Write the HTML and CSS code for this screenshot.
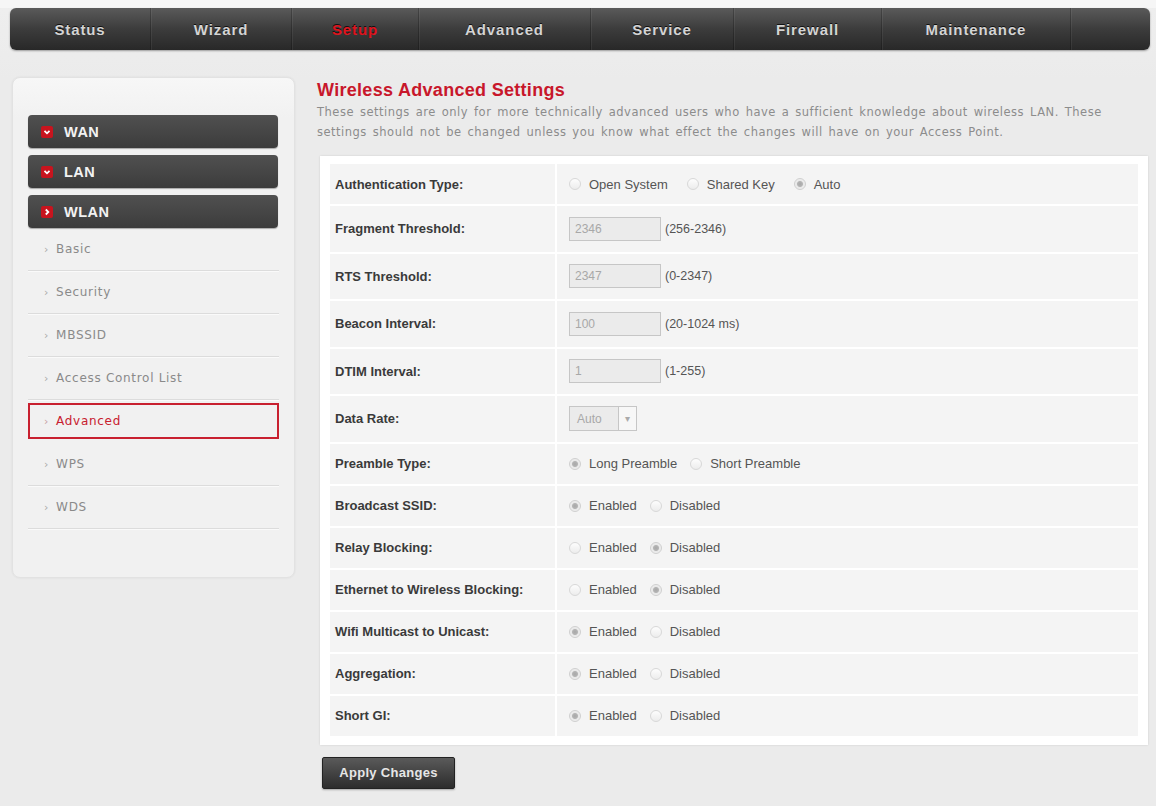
FILE: index.html
```html
<!DOCTYPE html>
<html>
<head>
<meta charset="utf-8">
<title>Wireless Advanced Settings</title>
<link rel="stylesheet" href="styles.css">
</head>
<body>

<div class="topnav">
  <a class="nav-item">Status</a>
  <a class="nav-item">Wizard</a>
  <a class="nav-item active">Setup</a>
  <a class="nav-item">Advanced</a>
  <a class="nav-item">Service</a>
  <a class="nav-item">Firewall</a>
  <a class="nav-item">Maintenance</a>
  <span class="nav-item nav-end"></span>
</div>

<div class="main">
  <div class="sidebar">
    <div class="menu-head">
      <span class="menu-icon"><svg width="12" height="12" viewBox="0 0 12 12"><path d="M3.5 4.8 L6 7.3 L8.5 4.8" fill="none" stroke="#fff" stroke-width="1.8"/></svg></span>WAN
    </div>
    <div class="menu-head">
      <span class="menu-icon"><svg width="12" height="12" viewBox="0 0 12 12"><path d="M3.5 4.8 L6 7.3 L8.5 4.8" fill="none" stroke="#fff" stroke-width="1.8"/></svg></span>LAN
    </div>
    <div class="menu-head">
      <span class="menu-icon"><svg width="12" height="12" viewBox="0 0 12 12"><path d="M4.8 3.5 L7.3 6 L4.8 8.5" fill="none" stroke="#fff" stroke-width="1.8"/></svg></span>WLAN
    </div>
    <ul class="submenu">
      <li><span class="sub-arrow">›</span>Basic</li>
      <li><span class="sub-arrow">›</span>Security</li>
      <li><span class="sub-arrow">›</span>MBSSID</li>
      <li><span class="sub-arrow">›</span>Access Control List</li>
      <li class="selected"><span class="sub-arrow">›</span>Advanced</li>
      <li><span class="sub-arrow">›</span>WPS</li>
      <li><span class="sub-arrow">›</span>WDS</li>
    </ul>
  </div>

  <div class="content">
    <h1 class="page-title">Wireless Advanced Settings</h1>
    <p class="page-desc">These settings are only for more technically advanced users who have a sufficient knowledge about wireless LAN. These settings should not be changed unless you know what effect the changes will have on your Access Point.</p>

    <div class="form-panel">
      <div class="form-row">
        <div class="form-label">Authentication Type:</div>
        <div class="form-value wide-opts">
          <label><input type="radio" name="auth">Open System</label>
          <label><input type="radio" name="auth">Shared Key</label>
          <label><input type="radio" name="auth" checked>Auto</label>
        </div>
      </div>
      <div class="form-row tall">
        <div class="form-label">Fragment Threshold:</div>
        <div class="form-value">
          <input class="text-field" type="text" value="2346" disabled><span class="range">(256-2346)</span>
        </div>
      </div>
      <div class="form-row tall">
        <div class="form-label">RTS Threshold:</div>
        <div class="form-value">
          <input class="text-field" type="text" value="2347" disabled><span class="range">(0-2347)</span>
        </div>
      </div>
      <div class="form-row tall">
        <div class="form-label">Beacon Interval:</div>
        <div class="form-value">
          <input class="text-field" type="text" value="100" disabled><span class="range">(20-1024 ms)</span>
        </div>
      </div>
      <div class="form-row tall">
        <div class="form-label">DTIM Interval:</div>
        <div class="form-value">
          <input class="text-field" type="text" value="1" disabled><span class="range">(1-255)</span>
        </div>
      </div>
      <div class="form-row tall">
        <div class="form-label">Data Rate:</div>
        <div class="form-value">
          <div class="select-box"><span class="select-text">Auto</span><span class="select-arrow">▾</span></div>
        </div>
      </div>
      <div class="form-row">
        <div class="form-label">Preamble Type:</div>
        <div class="form-value">
          <label><input type="radio" name="preamble" checked>Long Preamble</label>
          <label><input type="radio" name="preamble">Short Preamble</label>
        </div>
      </div>
      <div class="form-row">
        <div class="form-label">Broadcast SSID:</div>
        <div class="form-value">
          <label><input type="radio" name="ssid" checked>Enabled</label>
          <label><input type="radio" name="ssid">Disabled</label>
        </div>
      </div>
      <div class="form-row">
        <div class="form-label">Relay Blocking:</div>
        <div class="form-value">
          <label><input type="radio" name="relay">Enabled</label>
          <label><input type="radio" name="relay" checked>Disabled</label>
        </div>
      </div>
      <div class="form-row">
        <div class="form-label">Ethernet to Wireless Blocking:</div>
        <div class="form-value">
          <label><input type="radio" name="eth">Enabled</label>
          <label><input type="radio" name="eth" checked>Disabled</label>
        </div>
      </div>
      <div class="form-row">
        <div class="form-label">Wifi Multicast to Unicast:</div>
        <div class="form-value">
          <label><input type="radio" name="mcast" checked>Enabled</label>
          <label><input type="radio" name="mcast">Disabled</label>
        </div>
      </div>
      <div class="form-row">
        <div class="form-label">Aggregation:</div>
        <div class="form-value">
          <label><input type="radio" name="aggr" checked>Enabled</label>
          <label><input type="radio" name="aggr">Disabled</label>
        </div>
      </div>
      <div class="form-row">
        <div class="form-label">Short GI:</div>
        <div class="form-value">
          <label><input type="radio" name="sgi" checked>Enabled</label>
          <label><input type="radio" name="sgi">Disabled</label>
        </div>
      </div>
    </div>

    <button class="apply-btn" type="button">Apply Changes</button>
  </div>
</div>

</body>
</html>
```

FILE: styles.css
```css
html {
  background-color: #ebebeb;
}

body {
  margin: 0;
  font-family: "Liberation Sans", Arial, sans-serif;
  color: #333;
  background: linear-gradient(#f6f6f6 0, #f6f6f6 8px, #eeeeee 8px, #ebebeb 80px);
  min-height: 806px;
}

/* top menu */
.topnav {
  display: grid;
  grid-template-columns: 141px 141px 127px 172px 143px 148px 189px 1fr;
  height: 42px;
  margin: 8px 6px 0 10px;
  border-radius: 6px;
  background: linear-gradient(#5a5a5a, #3c3c3c 50%, #282828);
  box-shadow: 0 1px 2px rgba(0, 0, 0, 0.35);
}

.nav-item {
  display: flex;
  align-items: center;
  justify-content: center;
  border-right: 1px solid rgba(0, 0, 0, 0.22);
  box-shadow: 1px 0 0 rgba(255, 255, 255, 0.06);
  font-size: 15px;
  font-weight: bold;
  letter-spacing: 0.9px;
  color: #d4d4d4;
  text-shadow: 0 -1px 0 #111;
}

.nav-item.active {
  color: #e0141e;
}

.nav-end {
  border-right: none;
  box-shadow: none;
}

.main {
  display: flex;
  align-items: flex-start;
  padding: 27px 8px 0 12px;
  gap: 22px;
}

/* side menu */
.sidebar {
  width: 283px;
  box-sizing: border-box;
  padding: 37px 15px 48px 15px;
  background: linear-gradient(#f7f7f7, #f1f1f1 40px);
  border: 1px solid #e2e2e2;
  border-radius: 8px;
  box-shadow: 0 0 2px rgba(0, 0, 0, 0.08);
}

.menu-head {
  display: flex;
  align-items: center;
  width: 250px;
  height: 33px;
  box-sizing: border-box;
  padding-left: 13px;
  margin-bottom: 7px;
  border-radius: 4px;
  background: linear-gradient(#505050, #3c3c3c);
  box-shadow: 0 1px 1px rgba(0, 0, 0, 0.3);
  color: #f2f2f2;
  font-size: 14.5px;
  font-weight: bold;
  letter-spacing: 0.5px;
}

.menu-head:nth-of-type(3) {
  margin-bottom: 0;
}

.menu-icon {
  display: flex;
  width: 12px;
  height: 12px;
  margin-right: 11px;
  border-radius: 2px;
  background-color: #c8141e;
}

.submenu {
  list-style: none;
  margin: 0;
  padding: 0;
}

.submenu li {
  display: flex;
  align-items: center;
  height: 42px;
  padding-left: 16px;
  border-bottom: 1px solid #dcdcdc;
  box-shadow: 0 1px 0 #fafafa;
  font-family: "DejaVu Sans", Verdana, sans-serif;
  font-size: 12px;
  letter-spacing: 0.7px;
  color: #8a8a8a;
}

.sub-arrow {
  margin-right: 7px;
  font-size: 11px;
  color: #aaa;
}

.submenu li.selected {
  height: 32px;
  margin: 3px 0 4px 0;
  border: 2px solid #c8202f;
  box-shadow: none;
  padding-left: 14px;
  color: #c8202f;
}

.submenu li.selected .sub-arrow {
  color: #c8a0a4;
}

/* content */
.content {
  flex: 1;
  padding-top: 2px;
}

.page-title {
  margin: 0;
  font-size: 18px;
  line-height: 22px;
  letter-spacing: 0.3px;
  color: #c8172b;
}

.page-desc {
  margin: 1px 0 0 0;
  width: 800px;
  font-family: "DejaVu Sans", Verdana, sans-serif;
  font-size: 11.5px;
  line-height: 20px;
  letter-spacing: 0.5px;
  word-spacing: 1.8px;
  color: #8c8c8c;
}

.form-panel {
  display: flex;
  flex-direction: column;
  gap: 2px;
  margin: 14px 0 0 3px;
  padding: 8px 10px 9px 10px;
  background-color: #fff;
  box-shadow: 0 0 2px rgba(0, 0, 0, 0.12);
}

.form-row {
  display: grid;
  grid-template-columns: 225px 1fr;
  gap: 2px;
  height: 40px;
}

.form-row.tall {
  height: 45.5px;
}

.form-label,
.form-value {
  display: flex;
  align-items: center;
  background-color: #f4f4f4;
}

.form-label {
  padding-left: 5px;
  font-size: 13px;
  font-weight: bold;
  color: #3a3a3a;
}

.form-value {
  padding-left: 12px;
  font-size: 13px;
  color: #555;
}

.form-value label {
  display: flex;
  align-items: center;
  margin-right: 13px;
}

.wide-opts label {
  margin-right: 19px;
}

input[type="radio"] {
  appearance: none;
  width: 12px;
  height: 12px;
  margin: 0 8px 0 0;
  border: 1px solid #d8d8d8;
  border-radius: 50%;
  background: linear-gradient(#fdfdfd, #ececec);
}

input[type="radio"]:checked {
  border-color: #cfcfcf;
  background: radial-gradient(circle, #a8a8a8 0, #b4b4b4 2.5px, #e8e8e8 3.5px, #f2f2f2 6px);
}

.text-field {
  width: 92px;
  height: 24px;
  box-sizing: border-box;
  padding: 0 5px;
  border: 1px solid #c6c6c6;
  background-color: #ebebeb;
  font-family: "Liberation Sans", Arial, sans-serif;
  font-size: 12px;
  color: #a8a8a8;
}

.range {
  margin-left: 4px;
  font-size: 12.5px;
  color: #555;
}

.select-box {
  display: flex;
  align-items: stretch;
  width: 68px;
  height: 25px;
  box-sizing: border-box;
  border: 1px solid #c6c6c6;
  background-color: #ebebeb;
  font-size: 12px;
  color: #a8a8a8;
}

.select-text {
  flex: 1;
  display: flex;
  align-items: center;
  padding-left: 7px;
}

.select-arrow {
  display: flex;
  align-items: center;
  justify-content: center;
  width: 17px;
  border-left: 1px solid #c6c6c6;
  background-color: #f7f7f7;
  font-size: 10px;
  color: #aaa;
}

.apply-btn {
  display: block;
  width: 133px;
  height: 32px;
  margin: 12px 0 0 5px;
  border: 1px solid #222;
  border-radius: 2px;
  background: linear-gradient(#5a5a5a, #2c2c2c);
  box-shadow: 0 1px 2px rgba(0, 0, 0, 0.3);
  font-family: "Liberation Sans", Arial, sans-serif;
  font-size: 13px;
  font-weight: bold;
  letter-spacing: 0.3px;
  color: #e6e6e6;
}
```
